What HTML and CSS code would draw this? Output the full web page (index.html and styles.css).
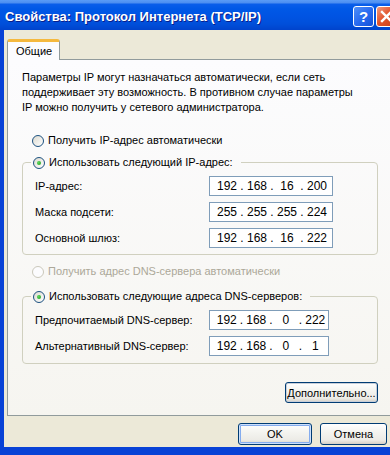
FILE: index.html
```html
<!DOCTYPE html>
<html lang="ru">
<head>
<meta charset="utf-8">
<link rel="stylesheet" href="styles.css">
</head>
<body>
<div class="window">
  <div class="titlebar">
    <span class="title">Свойства: Протокол Интернета (TCP/IP)</span>
    <span class="tb-btn tb-help">?</span>
    <span class="tb-btn tb-close"><svg width="13" height="13" viewBox="0 0 13 13"><path d="M2 2 L11 11 M11 2 L2 11" stroke="#fff" stroke-width="2.4" stroke-linecap="square"/></svg></span>
  </div>
  <div class="client">
    <div class="tabs"><div class="tab">Общие</div></div>
    <div class="panel">
      <p class="intro">Параметры IP могут назначаться автоматически, если сеть<br>поддерживает эту возможность. В противном случае параметры<br>IP можно получить у сетевого администратора.</p>

      <div class="radio-row first-radio"><span class="radio"></span><span>Получить IP-адрес автоматически</span></div>

      <fieldset class="group">
        <legend><span class="radio-row"><span class="radio checked"></span><span>Использовать следующий IP-адрес:</span></span></legend>
        <div class="rows">
          <div class="row"><span class="lbl">IP-адрес:</span><span class="ip"><span class="oct">192</span><span class="dot">.</span><span class="oct">168</span><span class="dot">.</span><span class="oct">16</span><span class="dot">.</span><span class="oct">200</span></span></div>
          <div class="row"><span class="lbl">Маска подсети:</span><span class="ip"><span class="oct">255</span><span class="dot">.</span><span class="oct">255</span><span class="dot">.</span><span class="oct">255</span><span class="dot">.</span><span class="oct">224</span></span></div>
          <div class="row"><span class="lbl">Основной шлюз:</span><span class="ip"><span class="oct">192</span><span class="dot">.</span><span class="oct">168</span><span class="dot">.</span><span class="oct">16</span><span class="dot">.</span><span class="oct">222</span></span></div>
        </div>
      </fieldset>

      <div class="radio-row disabled dns-auto"><span class="radio"></span><span>Получить адрес DNS-сервера автоматически</span></div>

      <fieldset class="group group-dns">
        <legend><span class="radio-row"><span class="radio checked"></span><span>Использовать следующие адреса DNS-серверов:</span></span></legend>
        <div class="rows">
          <div class="row"><span class="lbl">Предпочитаемый DNS-сервер:</span><span class="ip ip-dns"><span class="oct">192</span><span class="dot">.</span><span class="oct">168</span><span class="dot">.</span><span class="oct">0</span><span class="dot">.</span><span class="oct">222</span></span></div>
          <div class="row"><span class="lbl">Альтернативный DNS-сервер:</span><span class="ip ip-dns"><span class="oct">192</span><span class="dot">.</span><span class="oct">168</span><span class="dot">.</span><span class="oct">0</span><span class="dot">.</span><span class="oct">1</span></span></div>
        </div>
      </fieldset>

      <div class="adv-row"><button class="btn btn-adv">Дополнительно...</button></div>
    </div>
    <div class="footer">
      <button class="btn btn-ok">OK</button>
      <button class="btn btn-cancel">Отмена</button>
    </div>
  </div>
</div>
</body>
</html>
```

FILE: styles.css
```css
html, body {
  margin: 0;
  padding: 0;
  width: 390px;
  height: 455px;
  overflow: hidden;
  background: #0842d6;
}
.window {
  width: 390px;
  height: 455px;
  overflow: hidden;
  display: flex;
  flex-direction: column;
  background: #0842d6;
  font-family: "Liberation Sans", Arial, sans-serif;
  font-size: 11px;
  color: #000;
}
.titlebar {
  height: 30px;
  flex: none;
  display: flex;
  align-items: center;
  padding: 0 0 0 5px;
  box-sizing: border-box;
  background: linear-gradient(#5a9cf7 0, #4b8df0 3px, #0a5eea 4px, #0058e6 9px, #0054e3 16px, #004fda 24px, #0043cc 30px);
}
.title {
  flex: 1;
  min-width: 0;
  color: #fff;
  font-weight: bold;
  font-size: 13px;
  letter-spacing: 0;
  text-shadow: 1px 1px 0 #0a1e8a;
  white-space: nowrap;
  padding-top: 2px;
}
.tb-btn {
  flex: none;
  width: 19px;
  height: 19px;
  border: 1px solid #fff;
  border-radius: 3px;
  display: flex;
  align-items: center;
  justify-content: center;
  margin-top: 2px;
}
.tb-help {
  background: linear-gradient(135deg, #4f8ff7 0%, #2a6cf0 50%, #1450d8 100%);
  color: #fff;
  font-weight: bold;
  font-size: 15px;
  margin-right: 2px;
}
.tb-close {
  background: linear-gradient(135deg, #f09a7e 0%, #e2562f 45%, #c83d16 100%);
  margin-right: -7px;
}
.client {
  flex: 1;
  margin-left: 4px;
  background: #ece9d8;
  display: flex;
  flex-direction: column;
  padding-top: 9px;
  border-bottom: 8px solid #0842d6;
}
.tabs {
  display: flex;
  padding-left: 3px;
}
.tab {
  position: relative;
  z-index: 1;
  height: 18px;
  padding: 0 7px 0 8px;
  margin-bottom: -1px;
  background: #fcfcfe;
  border: 1px solid #919b9c;
  border-bottom: none;
  border-top: 3px solid #f5b93e;
  border-radius: 3px 3px 0 0;
  display: flex;
  align-items: center;
  line-height: 14px;
}
.panel {
  margin-left: 3px;
  border: 1px solid #919b9c;
  border-right: none;
  background: linear-gradient(#fcfcfe, #f6f5f0);
  padding: 10px 12px 12px 14px;
}
.intro {
  margin: 0;
  line-height: 15px;
  white-space: nowrap;
}
.radio-row {
  display: flex;
  align-items: center;
  height: 15px;
  line-height: 15px;
  white-space: nowrap;
}
.first-radio {
  margin: 18px 0 0 10px;
}
.radio {
  width: 10px;
  height: 10px;
  border: 1px solid #1c5180;
  border-radius: 50%;
  background: linear-gradient(135deg, #dcdad0, #ffffff);
  margin-right: 4px;
  flex: none;
  display: flex;
  align-items: center;
  justify-content: center;
}
.radio.checked::after {
  content: "";
  width: 4px;
  height: 4px;
  border-radius: 50%;
  background: radial-gradient(circle at 35% 35%, #5ed85e, #1a9b1a);
}
.disabled {
  color: #aca899;
}
.disabled .radio {
  border-color: #cac8bb;
  background: #fcfcfe;
}
.group {
  margin: 7px 0 0 0;
  padding: 0 44px 6px 12px;
  border: 1px solid #d0d0bf;
  border-radius: 4px;
  min-width: 0;
}
.group legend {
  padding: 0 8px 0 2px;
  margin-left: -4px;
}
.rows {
  display: flex;
  flex-direction: column;
  gap: 6px;
  padding-top: 6px;
}
.row {
  display: flex;
  align-items: center;
  height: 20px;
}
.lbl {
  flex: none;
  width: 174px;
  white-space: nowrap;
}
.ip {
  flex: none;
  width: 124px;
  height: 20px;
  box-sizing: border-box;
  border: 1px solid #7f9db9;
  background: #fff;
  display: flex;
  align-items: center;
  padding-left: 4px;
  font-size: 12px;
}
.ip-dns {
  width: 120px;
}
.oct {
  width: 26px;
  text-align: center;
}
.dot {
  width: 4px;
  text-align: center;
}
.dns-auto {
  margin: 9px 0 0 10px;
}
.group-dns {
  margin-top: 10px;
  padding-bottom: 7px;
}
.adv-row {
  display: flex;
  justify-content: flex-end;
  margin-top: 18px;
  padding-right: 0;
}
.btn {
  font-family: "Liberation Sans", Arial, sans-serif;
  font-size: 11px;
  color: #000;
  border: 1px solid #003c74;
  border-radius: 3px;
  background: linear-gradient(#ffffff 0%, #f4f4f0 40%, #ecebe6 80%, #d6d0c5 100%);
  padding: 0;
  margin: 0;
}
.btn-adv {
  width: 93px;
  height: 21px;
  box-shadow: inset 0 0 0 1px #c8cfd9;
}
.footer {
  display: flex;
  justify-content: flex-end;
  gap: 8px;
  padding: 7px 3px 0 0;
}
.btn-ok {
  width: 74px;
  height: 22px;
  box-shadow: inset 0 0 0 1px #cde0fb, inset 0 0 0 2px #84acee;
}
.btn-cancel {
  width: 67px;
  height: 22px;
}
```
